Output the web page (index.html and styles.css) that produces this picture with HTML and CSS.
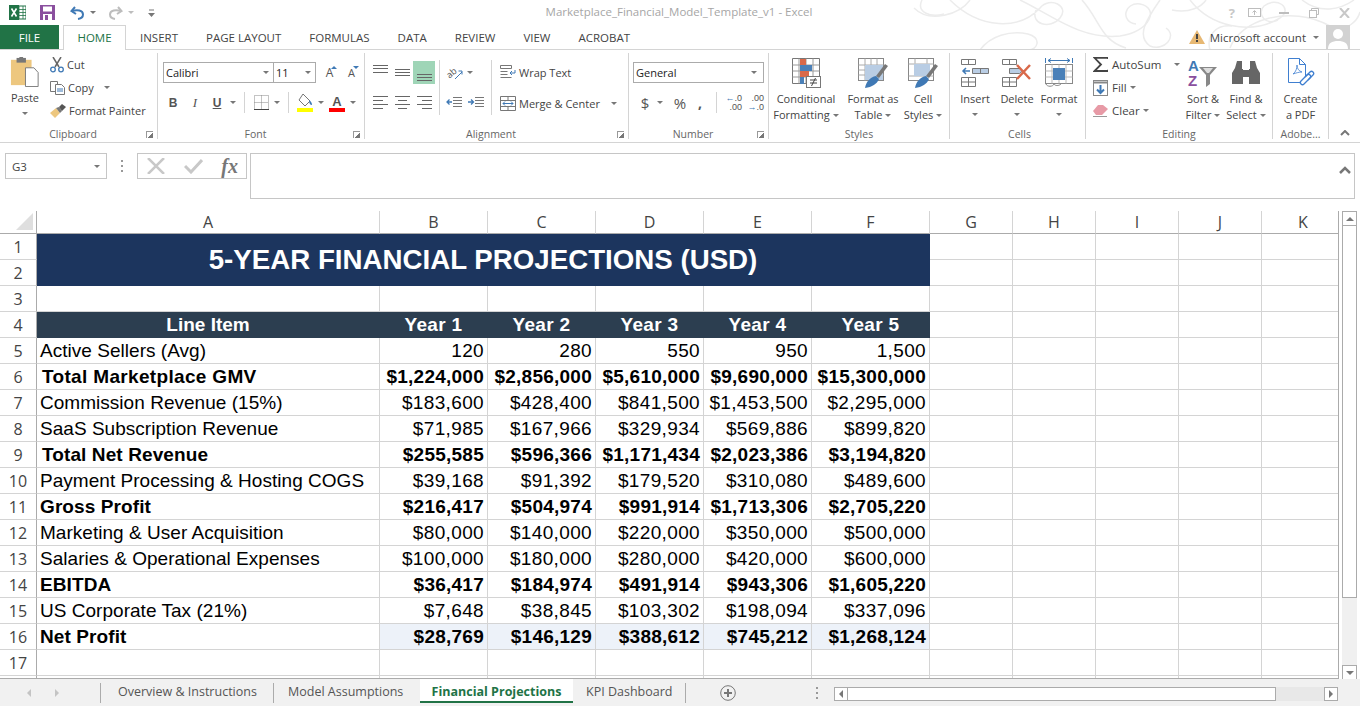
FILE: index.html
```html
<!DOCTYPE html>
<html>
	<head>
		<meta charset="UTF-8">
		<title>Marketplace_Financial_Model_Template_v1 - Excel</title>
		<link rel="stylesheet" href="styles.css">
	</head>
	<body>
		<div id="wrap">
			<!-- title bar -->
			<div class="titlebar">
				<svg class="swirl" width="450" height="50" viewBox="0 0 450 50" fill="none" stroke="#ececec" stroke-width="1.5">
					<path d="M4 8C20 24 50 14 60 0M40 0C70 30 110 30 130 8C140-4 160 6 150 18C140 30 120 24 126 10"/>
					<path d="M12 0C6 12 20 18 34 14M70 50C80 36 100 30 118 34C132 38 128 50 118 50"/>
					<path d="M110 0C140 14 170 40 210 36C240 32 250 8 230 4C214 2 210 22 226 24"/>
					<path d="M172 0C190 20 190 40 216 48M250 0C236 20 226 36 240 46C254 52 268 36 256 28"/>
					<path d="M280 0C300 26 340 36 370 18C384 8 366-4 354 6C346 14 356 26 368 20"/>
					<path d="M320 48C330 20 380 4 420 26C436 34 448 20 450 12M392 0C410 14 430 10 444 0"/>
					<path d="M300 50C296 36 306 24 322 26M262 10C280 14 292 6 296 0"/>
				</svg>
				<div class="qat">
					<svg width="17" height="15" viewBox="0 0 17 15"><rect x="7" y="1" width="10" height="13" fill="#fff" stroke="#217346"/><path d="M10 1v13M14 1v13M7 4.500h10M7 7.500h10M7 10.500h10" stroke="#217346" stroke-width=".8"/><rect y="0" width="10" height="15" fill="#217346"/><path d="M2.500 3.500l5 8M7.500 3.500l-5 8" stroke="#fff" stroke-width="1.600"/></svg>
					<svg class="save" width="15" height="15" viewBox="0 0 15 15"><path d="M0 0h15v15H0z" fill="#8a4f9e"/><rect x="3" y="1.500" width="9" height="5" fill="#fff"/><rect x="3" y="9" width="9" height="6" fill="#fff"/><rect x="5" y="10" width="3" height="5" fill="#8a4f9e"/></svg>
					<svg class="undo" width="15" height="14" viewBox="0 0 15 14" fill="none"><path d="M5 1L1.500 5 6 8" stroke="#3f79b5" stroke-width="2"/><path d="M2 5c5-1.500 11-1 11 3.500 0 2.500-2 4-5 4.500" stroke="#3f79b5" stroke-width="2"/></svg>
					<i class="caret"></i>
					<svg class="redo" width="15" height="14" viewBox="0 0 15 14" fill="none"><path d="M10 1l3.500 4L9 8" stroke="#bdbdbd" stroke-width="2"/><path d="M13 5C8 3.500 2 4 2 8.500c0 2.500 2 4 5 4.500" stroke="#bdbdbd" stroke-width="2"/></svg>
					<i class="caret light"></i>
					<svg class="custom" width="7" height="8" viewBox="0 0 7 8"><path d="M1 1h5" stroke="#777"/><path d="M0 4h7L3.500 8z" fill="#777"/></svg>
				</div>
				<div class="doctitle">Marketplace_Financial_Model_Template_v1 - Excel</div>
				<div class="winbtns">
					<span class="help">?</span>
					<svg width="13" height="9" viewBox="0 0 13 9" fill="none" stroke="#bdbdbd"><rect x=".5" y=".5" width="12" height="8"/><path d="M6.500 7V3M4.500 4.500l2-2 2 2"/></svg>
					<svg class="wmin" width="10" height="3" viewBox="0 0 10 3"><rect width="10" height="2" y="1" fill="#bdbdbd"/></svg>
					<svg class="wmax" width="10" height="10" viewBox="0 0 10 10" fill="none" stroke="#bdbdbd"><path d="M2.500 2.500V.5h7v6h-2"/><rect x=".5" y="2.500" width="7" height="7"/></svg>
					<svg class="wclose" width="11" height="10" viewBox="0 0 11 10" stroke="#c8c8c8" stroke-width="2"><path d="M1 0l9 10M10 0L1 10"/></svg>
				</div>
			</div>

			<!-- ribbon tabs -->
			<div class="tabs">
				<span class="tab file">FILE</span>
				<span class="tab home">HOME</span>
				<span class="tab">INSERT</span>
				<span class="tab">PAGE LAYOUT</span>
				<span class="tab">FORMULAS</span>
				<span class="tab">DATA</span>
				<span class="tab">REVIEW</span>
				<span class="tab">VIEW</span>
				<span class="tab">ACROBAT</span>
				<div class="account">
					<svg width="16" height="14" viewBox="0 0 16 14"><path d="M8 0l8 14H0z" fill="#e7b873"/><path d="M7 4h2v5H7zM7 10h2v2H7z" fill="#444"/></svg>
					<span class="acc-name">Microsoft account</span>
					<i class="caret"></i>
					<svg class="avatar" width="24" height="24" viewBox="0 0 24 24"><rect width="24" height="24" fill="#d2d2d2"/><circle cx="12" cy="9" r="5" fill="#fff"/><path d="M2 24c0-6 4-8 10-8s10 2 10 8z" fill="#fff"/></svg>
				</div>
			</div>

			<!-- ribbon -->
			<div class="ribbon">
				<section class="group g-clip">
					<div class="body">
						<div class="big paste">
							<svg class="ico" width="30" height="32" viewBox="0 0 30 32"><rect y="3" width="22" height="27" fill="#edc77f"/><rect x="6" y="1" width="10" height="5" fill="#777"/><rect x="9" y="0" width="4" height="3" fill="#777"/><path d="M15.500 11.500h9l4.500 5v15h-13.500z" fill="#fff" stroke="#777"/></svg>
							<span class="lbl">Paste</span>
							<i class="caret"></i>
						</div>
						<div class="rows">
							<div class="small"><svg width="14" height="16" viewBox="0 0 14 16" fill="none"><path d="M3 0l6 10M11 0L5 10" stroke="#666" stroke-width="1.500"/><circle cx="3" cy="12.500" r="2.300" stroke="#3f79b5" stroke-width="1.300"/><circle cx="11" cy="12.500" r="2.300" stroke="#3f79b5" stroke-width="1.300"/></svg><span>Cut</span></div>
							<div class="small"><svg width="15" height="14" viewBox="0 0 15 14" fill="#fff" stroke="#777"><path d="M.5.500h7v10h-7z"/><path d="M5.500 3.500h6l3 3v7h-9z"/><path d="M7 8h6M7 10h6" stroke="#3f79b5"/></svg><span>Copy</span><i class="caret gap"></i></div>
							<div class="small"><svg width="16" height="14" viewBox="0 0 16 14"><path d="M0 9l6-5 4 5-5 5z" fill="#edc77f"/><path d="M6 4l4 5 2-2-3-4z" fill="#777"/><path d="M9 3l3-3 4 3-4 4z" fill="#555"/></svg><span>Format Painter</span></div>
						</div>
					</div>
					<div class="glabel"><span>Clipboard</span><i class="launcher"></i></div>
				</section>

				<section class="group g-font">
					<div class="body col">
						<div class="row first">
							<div class="combo font-name"><span>Calibri</span><i class="caret"></i></div>
							<div class="combo font-size"><span>11</span><i class="caret"></i></div>
							<span class="tool grow">A<b class="up"></b></span>
							<span class="tool shrink">A<b class="down"></b></span>
						</div>
						<div class="row second">
							<span class="tool bold">B</span>
							<span class="tool italic">I</span>
							<span class="tool under">U</span>
							<i class="caret slot"></i>
							<i class="vsep"></i>
							<span class="tool"><svg width="15" height="15" viewBox="0 0 15 15" fill="none" stroke="#888" stroke-dasharray="1 1"><path d="M.5.500h14v14H.500zM7.500.5v14M.5 7.500h14"/><path d="M0 14.500h15" stroke="#444" stroke-dasharray="none"/></svg></span>
							<i class="caret slot"></i>
							<i class="vsep"></i>
							<span class="tool"><svg width="16" height="18" viewBox="0 0 16 18"><path d="M6 0l7 7-5 5-6-6z" fill="#fff" stroke="#777"/><path d="M12 6c2 1 3 3 3 5-2 0-3-2-3-5z" fill="#3f79b5"/><rect y="14" width="16" height="4" fill="#ffff00"/></svg></span>
							<i class="caret slot"></i>
							<span class="tool color">A<b></b></span>
							<i class="caret slot"></i>
						</div>
					</div>
					<div class="glabel"><span>Font</span><i class="launcher"></i></div>
				</section>

				<section class="group g-align">
					<div class="body">
						<div class="align-grid">
							<span class="tool"><svg width="15" height="19" viewBox="0 0 15 19" stroke="#666"><path d="M0 3.500h15M0 6.500h15M0 10.500h15" transform="translate(0 -1)"/></svg></span>
							<span class="tool"><svg width="15" height="19" viewBox="0 0 15 19" stroke="#666"><path d="M0 6.500h15M0 9.500h15M0 12.500h15"/></svg></span>
							<span class="tool on"><svg width="15" height="19" viewBox="0 0 15 19" stroke="#666"><path d="M0 11.500h15M0 14.500h15M0 17.500h15"/></svg></span>
							<span class="tool"><svg width="15" height="13" viewBox="0 0 15 13" stroke="#666"><path d="M0 .5h15M0 4.500h10M0 8.500h15M0 12.500h10"/></svg></span>
							<span class="tool"><svg width="15" height="13" viewBox="0 0 15 13" stroke="#666"><path d="M0 .5h15M3 4.500h9M0 8.500h15M3 12.500h9"/></svg></span>
							<span class="tool"><svg width="15" height="13" viewBox="0 0 15 13" stroke="#666"><path d="M0 .5h15M5 4.500h10M0 8.500h15M5 12.500h10"/></svg></span>
						</div>
						<i class="vsep tall"></i>
						<div class="align-grid two">
							<span class="tool tilt"><svg width="17" height="16" viewBox="0 0 17 16" fill="none"><text x="1" y="11" class="ab" transform="rotate(-40 6 9)">ab</text><path d="M9 14l7-7M12.500 6H16v3.500" stroke="#3f79b5"/></svg><i class="caret"></i></span>
							<span class="tool"></span>
							<span class="tool"><svg width="16" height="11" viewBox="0 0 16 11" fill="none" stroke="#777"><path d="M7 .5h9M7 3.500h9M7 6.500h9M7 9.500h9"/><path d="M6 5H1M3.500 2.500L1 5l2.500 2.500" stroke="#3f79b5" stroke-width="1.300"/></svg></span>
							<span class="tool"><svg width="16" height="11" viewBox="0 0 16 11" fill="none" stroke="#777"><path d="M7 .5h9M7 3.500h9M7 6.500h9M7 9.500h9"/><path d="M0 5h5M3 2.500L5.500 5 3 7.500" stroke="#3f79b5" stroke-width="1.300"/></svg></span>
						</div>
						<i class="vsep tall"></i>
						<div class="rows2">
							<div class="small"><svg width="16" height="15" viewBox="0 0 16 15" fill="none" stroke="#777"><path d="M.5.500h11v3H.500zM.5 6.500h7M.5 9.500h7M.5 12.500h11"/><path d="M15 5v3h-5M12 6l-2 2 2 2" stroke="#3f79b5"/></svg><span>Wrap Text</span></div>
							<div class="small"><svg width="16" height="15" viewBox="0 0 16 15" fill="none" stroke="#777"><path d="M.5.500h15v14H.500zM.5 4.500h15M.5 10.500h15M8 .5v4M8 10.500v4"/><path d="M3 7.500h10M5 5.500l-2 2 2 2M11 5.500l2 2-2 2" stroke="#3f79b5"/></svg><span>Merge &amp; Center</span><i class="caret merge"></i></div>
						</div>
					</div>
					<div class="glabel"><span>Alignment</span><i class="launcher"></i></div>
				</section>

				<section class="group g-num">
					<div class="body col">
						<div class="row first">
							<div class="combo general"><span>General</span><i class="caret"></i></div>
						</div>
						<div class="row second">
							<span class="tool dollar">$</span>
							<i class="caret slot"></i>
							<span class="tool pct">%</span>
							<span class="tool comma">,</span>
							<i class="vsep"></i>
							<span class="tool dec"><em class="blue">←</em>.0<br>.00</span>
							<span class="tool dec">.00<br><em class="blue">→</em>.0</span>
						</div>
					</div>
					<div class="glabel"><span>Number</span><i class="launcher"></i></div>
				</section>

				<section class="group g-styles">
					<div class="body">
						<div class="big w-cond">
							<svg class="ico" width="29" height="30" viewBox="0 0 29 30" fill="none"><path d="M.5.500h27v25H.500z" stroke="#777"/><path d="M7 .5v25M14 .5v25M21 .5v25M.5 7h27M.5 13h27M.5 19h27" stroke="#999"/><rect x="8" y="1" width="6" height="6" fill="#d9694a"/><rect x="8" y="7" width="12" height="6" fill="#4a80b8"/><rect x="8" y="13" width="9" height="6" fill="#d9694a"/><rect x="8" y="19" width="4" height="7" fill="#4a80b8"/><rect x="14.500" y="18.500" width="14" height="11" fill="#fff" stroke="#777"/><path d="M18 22h7M18 25h7M23.500 20l-4 8" stroke="#444"/></svg>
							<span class="lbl">Conditional</span>
							<span class="lbl">Formatting<i class="caret in"></i></span>
						</div>
						<div class="big w-table">
							<svg class="ico" width="30" height="30" viewBox="0 0 30 30" fill="none"><rect x=".5" y=".5" width="25" height="22" stroke="#888"/><path d="M.5 7h25M.5 12h25M.5 17h25M7 .5v22M13 .5v22M19 .5v22" stroke="#aaa"/><rect x="7" y="7" width="18" height="15" fill="#b9cde4"/><path d="M18 18l9-12 3 2-9 12z" fill="#777"/><path d="M7 30c1-6 5-11 11-12l3 3c-2 5-7 8-14 9z" fill="#3f79b5"/></svg>
							<span class="lbl">Format as</span>
							<span class="lbl">Table<i class="caret in"></i></span>
						</div>
						<div class="big w-cell">
							<svg class="ico" width="30" height="30" viewBox="0 0 30 30" fill="none"><rect x=".5" y=".5" width="25" height="22" stroke="#888"/><path d="M.5 6h25M7 .5v5M19 .5v5M.5 18h25" stroke="#aaa"/><rect x="6" y="6" width="16" height="12" fill="#b9cde4"/><path d="M18 18l9-12 3 2-9 12z" fill="#777"/><path d="M7 30c1-6 5-11 11-12l3 3c-2 5-7 8-14 9z" fill="#3f79b5"/></svg>
							<span class="lbl">Cell</span>
							<span class="lbl">Styles<i class="caret in"></i></span>
						</div>
					</div>
					<div class="glabel plain"><span>Styles</span></div>
				</section>

				<section class="group g-cells">
					<div class="body">
						<div class="big w-42">
							<svg class="ico" width="28" height="28" viewBox="0 0 28 28" fill="none" stroke="#777"><path d="M.5.500h14v5H.500zM7.500.5v5M.5 18.500h14v9H.500zM7.500 18.500v9M.5 23h14"/><path d="M11.500 9.500h16v5h-16zM19.500 9.500v5" fill="#b9cde4"/><path d="M9 12H2M5 9l-3 3 3 3" stroke="#3f79b5" stroke-width="1.500"/></svg>
							<span class="lbl">Insert</span>
							<i class="caret drop"></i>
						</div>
						<div class="big w-42">
							<svg class="ico" width="30" height="28" viewBox="0 0 30 28" fill="none" stroke="#777"><path d="M.5.500h14v5H.500zM7.500.5v5M.5 18.500h14v9H.500zM7.500 18.500v9M.5 23h14"/><path d="M7.500 9.500h10l3 2.500-3 2.500h-10z" fill="#b9cde4"/><path d="M15 6l13 14M28 6L15 20" stroke="#d9694a" stroke-width="2.500"/></svg>
							<span class="lbl">Delete</span>
							<i class="caret drop"></i>
						</div>
						<div class="big w-42">
							<svg class="ico" width="28" height="30" viewBox="0 0 28 30" fill="none"><path d="M.5 0v5M27.500 0v5M3 2.500h22M6 .5L3 2.500l3 2M22 .5l3 2-3 2" stroke="#3f79b5"/><rect x=".5" y="6.500" width="27" height="19" stroke="#888"/><path d="M7 6.500v19M14 6.500v19M21 6.500v19M.5 13h27M.5 19h27" stroke="#bbb"/><rect x="8" y="10" width="12" height="12" fill="#4a80b8"/><path d="M1 26c1 3 7 3 8 0 1 2 5 2 7 0" stroke="#888"/></svg>
							<span class="lbl">Format</span>
							<i class="caret drop"></i>
						</div>
					</div>
					<div class="glabel plain"><span>Cells</span></div>
				</section>

				<section class="group g-edit">
					<div class="body">
						<div class="rows edit-rows">
							<div class="small"><svg width="15" height="15" viewBox="0 0 15 15" fill="none"><path d="M15 2V.8H1.500L8 7.500 1.500 14H15v-1.200" stroke="#444" stroke-width="1.800"/></svg><span>AutoSum</span><i class="caret gap2"></i></div>
							<div class="small"><svg width="15" height="16" viewBox="0 0 15 16" fill="none"><rect x=".5" y=".5" width="14" height="15" stroke="#888"/><path d="M.5 2.500h14" stroke="#888" stroke-width="2"/><path d="M7.500 5v8M4 9.500l3.500 3.500L11 9.500" stroke="#3f79b5" stroke-width="2"/></svg><span>Fill</span><i class="caret in"></i></div>
							<div class="small"><svg width="15" height="13" viewBox="0 0 15 13"><path d="M5 1h5l5 4-6 6H3L0 7z" fill="#e79aa6"/><path d="M0 12.500h14" stroke="#999"/></svg><span>Clear</span><i class="caret in"></i></div>
						</div>
						<div class="big w-44">
							<svg class="ico sort" width="32" height="30" viewBox="0 0 32 30"><text x="1" y="13" class="az a">A</text><text x="1" y="28" class="az z">Z</text><path d="M12 9h18l-7 8v9l-4 3V17z" fill="#888"/><path d="M16 10h10l-4 5h-2z" fill="#ddd"/></svg>
							<span class="lbl">Sort &amp;</span>
							<span class="lbl">Filter<i class="caret in"></i></span>
						</div>
						<div class="big w-42">
							<svg class="ico" width="28" height="24" viewBox="0 0 28 24" fill="#666"><path d="M5 0h5v8h1v15H0V12l3-5zM23 0h-5v8h-1v15h11V12l-3-5z"/><rect x="11" y="9" width="6" height="7"/></svg>
							<span class="lbl">Find &amp;</span>
							<span class="lbl">Select<i class="caret in"></i></span>
						</div>
					</div>
					<div class="glabel plain"><span>Editing</span></div>
				</section>

				<section class="group g-adobe">
					<div class="body">
						<div class="big w-55">
							<svg class="ico" width="28" height="30" viewBox="0 0 28 30" fill="none" stroke="#3f7fd0"><path d="M1.500.5h11l6 6v18h-17z"/><path d="M12.500.5v6h6"/><path d="M6 16c3-2 4-6 4-9 0 4 2 6 5 7-3 0-6 1-9 2z" stroke-width=".8"/><path d="M14 23l6-6c2-2 5 1 3 3l-6 6c-2 2-5-1-3-3z" stroke-width="1.300" fill="#fff"/><path d="M18 19l5-5c2-2 5 1 3 3l-5 5" stroke-width="1.300"/></svg>
							<span class="lbl">Create</span>
							<span class="lbl">a PDF</span>
						</div>
					</div>
					<div class="glabel plain"><span>Adobe...</span></div>
				</section>

				<svg class="collapse" width="10" height="6" viewBox="0 0 10 6" fill="none" stroke="#777" stroke-width="2"><path d="M1 5l4-4 4 4"/></svg>
			</div>

			<!-- formula bar -->
			<div class="formula">
				<div class="namebox"><span>G3</span><i class="caret"></i></div>
				<div class="dots"></div>
				<div class="fbtns">
					<svg width="18" height="16" viewBox="0 0 18 16" stroke="#c8c8c8" stroke-width="2.500"><path d="M1 0l16 16M17 0L1 16"/></svg>
					<svg width="19" height="16" viewBox="0 0 19 16" fill="none" stroke="#c8c8c8" stroke-width="3"><path d="M1 8l6 6L18 2"/></svg>
					<span class="fx">fx</span>
				</div>
				<div class="finput">
					<svg width="12" height="8" viewBox="0 0 12 8" fill="none" stroke="#777" stroke-width="2.500"><path d="M1 7l5-5 5 5"/></svg>
				</div>
			</div>

			<!-- sheet -->
			<div class="main">
				<div class="sheet">
					<table class="grid">
						<colgroup>
							<col class="c-head"><col class="c-a"><col class="c-y"><col class="c-y"><col class="c-y"><col class="c-y"><col class="c-f"><col class="c-g"><col class="c-g"><col class="c-g"><col class="c-g"><col class="c-g">
						</colgroup>
						<tr class="letters"><th class="corner"><i></i></th><th>A</th><th>B</th><th>C</th><th>D</th><th>E</th><th>F</th><th>G</th><th>H</th><th>I</th><th>J</th><th>K</th></tr>
						<tr><th>1</th><td class="title" colspan="6" rowspan="2">5-YEAR FINANCIAL PROJECTIONS (USD)</td><td></td><td></td><td></td><td></td><td></td></tr>
						<tr><th>2</th><td></td><td></td><td></td><td></td><td></td></tr>
						<tr><th>3</th><td></td><td></td><td></td><td></td><td></td><td></td><td></td><td></td><td></td><td></td><td></td></tr>
						<tr class="head"><th>4</th><td>Line Item</td><td>Year 1</td><td>Year 2</td><td>Year 3</td><td>Year 4</td><td>Year 5</td><td></td><td></td><td></td><td></td><td></td></tr>
						<tr><th>5</th><td class="name">Active Sellers (Avg)</td><td>120</td><td>280</td><td>550</td><td>950</td><td>1,500</td><td></td><td></td><td></td><td></td><td></td></tr>
						<tr class="strong"><th>6</th><td class="name ind">Total Marketplace GMV</td><td>$1,224,000</td><td>$2,856,000</td><td>$5,610,000</td><td>$9,690,000</td><td>$15,300,000</td><td></td><td></td><td></td><td></td><td></td></tr>
						<tr><th>7</th><td class="name">Commission Revenue (15%)</td><td>$183,600</td><td>$428,400</td><td>$841,500</td><td>$1,453,500</td><td>$2,295,000</td><td></td><td></td><td></td><td></td><td></td></tr>
						<tr><th>8</th><td class="name">SaaS Subscription Revenue</td><td>$71,985</td><td>$167,966</td><td>$329,934</td><td>$569,886</td><td>$899,820</td><td></td><td></td><td></td><td></td><td></td></tr>
						<tr class="strong"><th>9</th><td class="name ind net-rev">Total Net Revenue</td><td>$255,585</td><td>$596,366</td><td>$1,171,434</td><td>$2,023,386</td><td>$3,194,820</td><td></td><td></td><td></td><td></td><td></td></tr>
						<tr><th>10</th><td class="name">Payment Processing &amp; Hosting COGS</td><td>$39,168</td><td>$91,392</td><td>$179,520</td><td>$310,080</td><td>$489,600</td><td></td><td></td><td></td><td></td><td></td></tr>
						<tr class="strong"><th>11</th><td class="name">Gross Profit</td><td>$216,417</td><td>$504,974</td><td>$991,914</td><td>$1,713,306</td><td>$2,705,220</td><td></td><td></td><td></td><td></td><td></td></tr>
						<tr><th>12</th><td class="name">Marketing &amp; User Acquisition</td><td>$80,000</td><td>$140,000</td><td>$220,000</td><td>$350,000</td><td>$500,000</td><td></td><td></td><td></td><td></td><td></td></tr>
						<tr><th>13</th><td class="name">Salaries &amp; Operational Expenses</td><td>$100,000</td><td>$180,000</td><td>$280,000</td><td>$420,000</td><td>$600,000</td><td></td><td></td><td></td><td></td><td></td></tr>
						<tr class="strong"><th>14</th><td class="name">EBITDA</td><td>$36,417</td><td>$184,974</td><td>$491,914</td><td>$943,306</td><td>$1,605,220</td><td></td><td></td><td></td><td></td><td></td></tr>
						<tr><th>15</th><td class="name">US Corporate Tax (21%)</td><td>$7,648</td><td>$38,845</td><td>$103,302</td><td>$198,094</td><td>$337,096</td><td></td><td></td><td></td><td></td><td></td></tr>
						<tr class="strong net"><th>16</th><td class="name">Net Profit</td><td>$28,769</td><td>$146,129</td><td>$388,612</td><td>$745,212</td><td>$1,268,124</td><td></td><td></td><td></td><td></td><td></td></tr>
						<tr><th>17</th><td></td><td></td><td></td><td></td><td></td><td></td><td></td><td></td><td></td><td></td><td></td></tr>
						<tr><th></th><td></td><td></td><td></td><td></td><td></td><td></td><td></td><td></td><td></td><td></td><td></td></tr>
					</table>
				</div>
				<div class="vscroll">
					<div class="sbtn"><i class="arrow-up"></i></div>
					<div class="vthumb"></div>
					<div class="vtrack"></div>
					<div class="sbtn"><i class="arrow-down"></i></div>
				</div>
			</div>

			<!-- sheet tabs -->
			<div class="bottom">
				<div class="nav"><i class="arrow-left"></i><i class="arrow-right"></i></div>
				<span class="stab first-tab">Overview &amp; Instructions</span>
				<span class="stab second-tab">Model Assumptions</span>
				<span class="stab active">Financial Projections</span>
				<span class="stab last-tab">KPI Dashboard</span>
				<svg class="plus" width="16" height="16" viewBox="0 0 16 16" fill="none" stroke="#777"><circle cx="8" cy="8" r="7.300"/><path d="M8 4v8M4 8h8" stroke-width="2"/></svg>
				<div class="dots bdots"></div>
				<div class="hscroll">
					<div class="hbtn"><i class="arrow-left dark"></i></div>
					<div class="hthumb"></div>
					<div class="htrack"></div>
					<div class="hbtn"><i class="arrow-right dark"></i></div>
				</div>
			</div>
		</div>
	</body>
</html>
```

FILE: styles.css
```css
*{
	box-sizing: border-box;
}
html,body{
	margin: 0;
	padding: 0;
	background: #fff;
}
i,em{
	font-style: normal;
}
#wrap{
	width: 1360px;
	height: 706px;
	overflow: hidden;
	display: flex;
	flex-direction: column;
	font-family: "Open Sans", "Noto Sans", sans-serif;
	font-size: 11px;
	color: #444;
}
.caret{
	display: inline-block;
	width: 0;
	height: 0;
	border-style: solid;
	border-width: 3px 3px 0 3px;
	border-color: #777 transparent transparent transparent;
}
.caret.light{
	border-top-color: #bdbdbd;
}

/* title bar */
.titlebar{
	position: relative;
	height: 25px;
	display: flex;
	align-items: center;
	flex: none;
}
.swirl{
	position: absolute;
	left: 910px;
	top: 0;
}
.qat{
	width: 300px;
	display: flex;
	align-items: center;
	padding-left: 9px;
}
.qat .save{
	margin-left: 14px;
}
.qat .undo{
	margin-left: 15px;
	margin-right: 5px;
}
.qat .redo{
	margin-left: 12px;
	margin-right: 5px;
}
.qat .custom{
	margin-left: 14px;
}
.doctitle{
	position: absolute;
	left: 0;
	right: 0;
	top: 4px;
	text-align: center;
	font-size: 11.500px;
	color: #a6a6a6;
	margin-left: -2px;
}
.winbtns{
	margin-left: auto;
	display: flex;
	align-items: center;
	padding-right: 10px;
	position: relative;
}
.help{
	font-size: 13px;
	font-weight: bold;
	color: #c8c8c8;
	margin-right: 13px;
}
.wmin{
	margin-left: 18px;
}
.wmax{
	margin-left: 20px;
}
.wclose{
	margin-left: 20px;
}

/* ribbon tabs */
.tabs{
	height: 25px;
	display: flex;
	flex: none;
	border-bottom: 1px solid #d4d4d4;
	position: relative;
}
.tab{
	padding: 0 14px;
	line-height: 25px;
	font-size: 11.500px;
	color: #444;
}
.tab.file{
	width: 59px;
	padding: 0;
	margin-right: 4px;
	text-align: center;
	background: #217346;
	color: #fff;
}
.tab.home{
	height: 25px;
	width: 63px;
	padding: 0;
	text-align: center;
	color: #217346;
	background: #fff;
	border: 1px solid #d4d4d4;
	border-bottom: none;
	line-height: 24px;
}
.account{
	margin-left: auto;
	display: flex;
	align-items: center;
	padding-right: 10px;
}
.acc-name{
	margin: 0 7px 0 5px;
	font-size: 11.500px;
}
.avatar{
	margin-left: 7px;
}

/* ribbon */
.ribbon{
	height: 93px;
	flex: none;
	display: flex;
	padding-top: 3px;
	border-bottom: 1px solid #d4d4d4;
	position: relative;
}
.group{
	height: 86px;
	display: flex;
	flex-direction: column;
	border-right: 1px solid #d4d4d4;
}
.g-clip{ width: 158px; }
.g-font{ width: 207px; }
.g-align{ width: 264px; }
.g-num{ width: 140px; }
.g-styles{ width: 181px; }
.g-cells{ width: 136px; padding-left: 4px; }
.g-edit{ width: 187px; }
.g-adobe{ width: 56px; }
.body{
	height: 73px;
	display: flex;
}
.body.col{
	flex-direction: column;
}
.glabel{
	height: 13px;
	display: flex;
	line-height: 17px;
	padding-right: 4px;
	color: #666;
	font-size: 10.500px;
}
.glabel span{
	flex: 1;
	text-align: center;
}
.glabel.plain{
	padding-right: 0;
}
.launcher{
	width: 7px;
	height: 7px;
	margin-top: 5px;
	border-left: 1px solid #999;
	border-top: 1px solid #999;
	background: linear-gradient(135deg, transparent 55%, #777 55%);
}
.big{
	display: flex;
	flex-direction: column;
	align-items: center;
	flex: none;
	white-space: nowrap;
}
.big .ico{
	height: 30px;
	margin-top: 5px;
	margin-bottom: 3px;
	flex: none;
}
.lbl{
	line-height: 16px;
	height: 16px;
}
.caret.in{
	margin-left: 3px;
	vertical-align: 2px;
}
.caret.drop{
	margin-top: 6px;
}
.w-cond{ width: 74px; }
.w-table{ width: 60px; }
.w-cell{ width: 40px; }
.w-42{ width: 42px; }
.w-44{ width: 44px; }
.w-55{ width: 55px; }
.rows{
	display: flex;
	flex-direction: column;
}
.small{
	height: 23px;
	display: flex;
	align-items: center;
	white-space: nowrap;
}
.small svg{
	flex: none;
	margin-right: 3px;
}
.paste{
	width: 50px;
}
.paste .caret{
	margin-top: 6px;
}
.paste .ico{
	margin-top: 4px;
	margin-bottom: 3px;
}
.caret.gap{
	margin-left: 10px;
}
.caret.gap2{
	margin-left: 13px;
}
.caret.merge{
	margin-left: 11px;
}
.row{
	display: flex;
	align-items: center;
	height: 21px;
}
.row.first{
	margin-top: 9px;
	margin-bottom: 9px;
}
.combo{
	height: 21px;
	border: 1px solid #ababab;
	background: #fff;
	display: flex;
	align-items: center;
	justify-content: space-between;
	padding: 0 4px 0 2px;
	color: #222;
}
.font-name{
	width: 111px;
	margin-left: 5px;
}
.font-size{
	width: 43px;
	margin-left: -1px;
}
.general{
	width: 131px;
	margin-left: 4px;
	padding-right: 6px;
}
.tool{
	width: 22px;
	height: 21px;
	flex: none;
	display: flex;
	align-items: center;
	justify-content: center;
	position: relative;
	color: #555;
}
.slot{
	margin: 0 2px;
	flex: none;
}
.vsep{
	width: 1px;
	height: 21px;
	background: #d4d4d4;
	margin: 0 5px 0 6px;
	flex: none;
}
.second{
	padding-left: 4px;
}
.bold{
	font: bold 12px "Liberation Sans", sans-serif;
}
.italic{
	font: italic 13px "Liberation Serif", serif;
}
.under{
	font: bold 12px "Liberation Sans", sans-serif;
	text-decoration: underline;
}
.grow,.shrink{
	width: 15px;
	font-size: 12px;
	margin-left: 6px;
}
.shrink{
	font-size: 11px;
	margin-left: 7px;
}
.up,.down{
	position: absolute;
	right: 0;
	top: 4px;
	border-style: solid;
	border-width: 0 3px 3px 3px;
	border-color: transparent transparent #3f79b5 transparent;
}
.down{
	border-width: 3px 3px 0 3px;
	border-color: #3f79b5 transparent transparent transparent;
}
.color{
	font: bold 13px "Liberation Sans", sans-serif;
	padding-bottom: 3px;
}
.color b{
	position: absolute;
	left: 3px;
	right: 3px;
	bottom: 1px;
	height: 4px;
	background: #ff0000;
}
.align-grid{
	display: grid;
	grid-template-columns: 22px 22px 22px;
	grid-template-rows: 23px 21px;
	row-gap: 8px;
	margin: 8px 0 0 4px;
	height: 52px;
	align-items: center;
}
.align-grid.two{
	grid-template-columns: 22px 22px;
	margin-left: -1px;
}
.tool.on{
	background: #9fd5b7;
	height: 23px;
}
.tilt{
	justify-content: flex-start;
	padding-left: 3px;
	width: 34px;
}
.tilt svg{
	overflow: visible;
}
.tilt .caret{
	margin-left: 4px;
	flex: none;
}
.ab{
	font: 9px "Open Sans", sans-serif;
	fill: #555;
}
.vsep.tall{
	height: 55px;
	margin: 7px 4px 0;
}
.rows2{
	margin: 8px 0 0 4px;
	display: flex;
	flex-direction: column;
	gap: 9px;
}
.rows2 .small{
	height: 22px;
}
.dollar{
	font-size: 15px;
	margin-left: 1px;
}
.g-num .slot{
	margin: 0 1px;
}
.pct{
	font-size: 15px;
	margin-left: 5px;
}
.comma{
	font-size: 14px;
	font-weight: bold;
	margin-left: -2px;
}
.g-num .vsep{
	margin-left: 5px;
}
.dec{
	display: block;
	font: 9px/9px "Liberation Sans", sans-serif;
	text-align: right;
	padding: 2px 2px 0 0;
}
.blue{
	color: #3f79b5;
	font-weight: bold;
}
.edit-rows{
	width: 88px;
	margin-left: 7px;
	flex: none;
	font-size: 11.500px;
}
.edit-rows .small svg{
	margin-right: 4px;
}
.az{
	font: bold 15px "Liberation Sans", sans-serif;
}
.az.a{
	fill: #3f79b5;
}
.az.z{
	fill: #8a4f9e;
}
.collapse{
	position: absolute;
	right: 10px;
	bottom: 6px;
}

/* formula bar */
.formula{
	height: 68px;
	flex: none;
	display: flex;
	align-items: flex-start;
	padding: 10px 5px 0;
}
.namebox{
	width: 102px;
	height: 26px;
	border: 1px solid #c6c6c6;
	display: flex;
	align-items: center;
	justify-content: space-between;
	padding: 0 6px;
	font-size: 11.500px;
}
.dots{
	width: 2px;
	height: 12px;
	margin: 7px 14px 0;
	background: repeating-linear-gradient(#999 0 2px, transparent 2px 5px);
}
.fbtns{
	width: 110px;
	height: 26px;
	border: 1px solid #c6c6c6;
	display: flex;
	align-items: center;
	justify-content: space-between;
	padding: 0 8px 0 9px;
}
.fx{
	font: italic bold 20px "Liberation Serif", serif;
	color: #777;
}
.finput{
	width: 1105px;
	height: 46px;
	margin-left: 3px;
	border: 1px solid #c6c6c6;
	text-align: right;
	padding: 8px 3px 0 0;
}

/* sheet */
.main{
	height: 468px;
	flex: none;
	display: flex;
}
.sheet{
	width: 1339px;
	height: 468px;
	overflow: hidden;
	border-bottom: 1px solid #ababab;
	border-right: 1px solid #ababab;
	flex: none;
}
.grid{
	table-layout: fixed;
	width: 1345px;
	border-collapse: separate;
	border-spacing: 0;
	font-family: "Liberation Sans", Arial, sans-serif;
	font-size: 19px;
	color: #000;
}
.c-head{ width: 37px; }
.c-a{ width: 343px; }
.c-y{ width: 108px; }
.c-f{ width: 118px; }
.c-g{ width: 83px; }
.grid tr{
	height: 26px;
}
.grid th{
	font: normal 16px "Open Sans", "Noto Sans", sans-serif;
	color: #444;
	padding: 0;
	text-align: center;
	border-right: 1px solid #ababab;
	border-bottom: 1px solid #d4d4d4;
	overflow: hidden;
}
.grid td{
	padding: 0 3px 0 0;
	text-align: right;
	white-space: nowrap;
	overflow: hidden;
	border-right: 1px solid #d4d4d4;
	border-bottom: 1px solid #d4d4d4;
	line-height: 25px;
	letter-spacing: .35px;
}
.grid tr.letters{
	height: 23px;
}
.letters th{
	border-right: 1px solid #d4d4d4;
	border-bottom: 1px solid #ababab;
	line-height: 20px;
}
.corner{
	padding: 0;
	position: relative;
}
.grid th.corner{
	border-right: 1px solid #ababab;
}
.corner i{
	position: absolute;
	right: 3px;
	bottom: 3px;
	width: 0;
	height: 0;
	border-style: solid;
	border-width: 0 0 17px 17px;
	border-color: transparent transparent #dfdfdf transparent;
}
.grid td.title{
	text-align: center;
	background: #1c355e;
	border-color: #1c355e;
	color: #fff;
	font-size: 27.700px;
	font-weight: bold;
	padding: 0;
	letter-spacing: 0;
}
.head td:nth-child(-n+7){
	background: #2c3e50;
	border-color: #2c3e50;
	color: #fff;
	font-weight: bold;
	text-align: center;
	padding: 0;
}
.head td:nth-child(2){
	letter-spacing: 0;
}
.grid td.name{
	text-align: left;
	padding-left: 3px;
	letter-spacing: .03px;
}
.strong td{
	font-weight: bold;
	letter-spacing: .25px;
}
.grid .strong td.name{
	letter-spacing: .1px;
}
.grid .strong td.ind{
	padding-left: 5px;
	letter-spacing: .33px;
}
.grid .strong td.net-rev{
	letter-spacing: .1px;
}
.net td:nth-child(n+3):nth-child(-n+7){
	background: #edf2f9;
}
.vscroll{
	width: 15px;
	height: 469px;
	margin-left: 3px;
	background: #f0f0f0;
	display: flex;
	flex-direction: column;
	flex: none;
}
.sbtn{
	height: 15px;
	background: #fff;
	border: 1px solid #ababab;
	display: flex;
	align-items: center;
	justify-content: center;
	flex: none;
}
.vthumb{
	height: 372px;
	background: #fff;
	border: 1px solid #ababab;
	border-top: none;
	flex: none;
}
.vtrack{
	flex: 1;
}
.arrow-up,.arrow-down{
	width: 0;
	height: 0;
	border-style: solid;
	border-width: 0 4px 4px 4px;
	border-color: transparent transparent #777 transparent;
}
.arrow-down{
	border-width: 4px 4px 0 4px;
	border-color: #777 transparent transparent transparent;
}
.arrow-left,.arrow-right{
	display: block;
	width: 0;
	height: 0;
	border-style: solid;
	border-width: 4px 4px 4px 0;
	border-color: transparent #c4c4c4 transparent transparent;
}
.arrow-right{
	border-width: 4px 0 4px 4px;
	border-color: transparent transparent transparent #c4c4c4;
}
.arrow-left.dark{
	border-right-color: #777;
}
.arrow-right.dark{
	border-left-color: #777;
}

/* sheet tabs */
.bottom{
	flex: 1;
	background: #f1f1f1;
	display: flex;
	align-items: flex-start;
	position: relative;
}
.nav{
	width: 101px;
	height: 20px;
	margin-top: 4px;
	padding: 0 0 0 27px;
	display: flex;
	align-items: center;
	gap: 24px;
	border-right: 1px solid #ababab;
}
.stab{
	height: 20px;
	margin-top: 4px;
	line-height: 18px;
	font-size: 12.500px;
	color: #555;
	white-space: nowrap;
	flex: none;
}
.first-tab{
	width: 173px;
	padding-left: 17px;
	border-right: 1px solid #ababab;
}
.second-tab{
	width: 146px;
	padding-left: 14px;
}
.stab.active{
	width: 153px;
	height: 24px;
	margin-top: 0;
	line-height: 26px;
	text-align: center;
	font-weight: bold;
	color: #217346;
	background: #fff;
	border-bottom: 2px solid #217346;
}
.last-tab{
	width: 113px;
	padding-left: 13px;
	border-right: 1px solid #ababab;
}
.plus{
	margin: 6px 0 0 34px;
	flex: none;
}
.bdots{
	margin: 8px 16px 0 80px;
}
.hscroll{
	width: 504px;
	height: 14px;
	margin: 8px 0 0 0;
	background: #e8e8e8;
	display: flex;
	flex: none;
}
.hbtn{
	width: 14px;
	height: 14px;
	background: #fff;
	border: 1px solid #ababab;
	display: flex;
	align-items: center;
	justify-content: center;
	flex: none;
}
.hthumb{
	width: 428px;
	background: #fff;
	border: 1px solid #ababab;
	border-left: none;
	flex: none;
}
.htrack{
	flex: 1;
}
```
